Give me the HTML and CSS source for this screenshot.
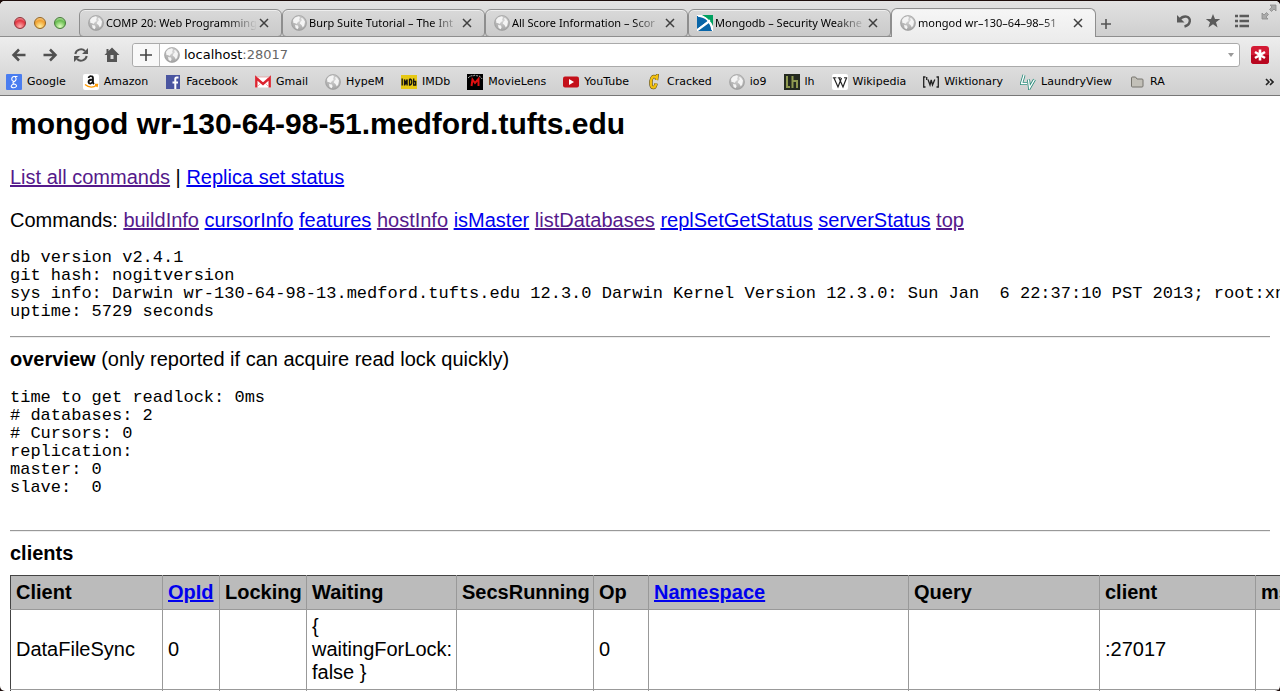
FILE: index.html
```html
<!DOCTYPE html>
<html lang="en">
<head>
<meta charset="utf-8">
<title>mongod wr-130-64-98-51.medford.tufts.edu</title>
<link rel="stylesheet" href="styles.css">
</head>
<body>
<svg class="defs" aria-hidden="true">
  <defs>
    <radialGradient id="ball" cx="50%" cy="30%" r="70%"><stop offset="0" stop-color="#d8d8d8"/><stop offset="1" stop-color="#a2a2a2"/></radialGradient>
    <symbol id="globe" viewBox="0 0 16 16">
      <circle cx="8" cy="8" r="7.500" fill="url(#ball)" stroke="#999" stroke-width=".6"/>
      <path d="M2 5l2-2.500 4-1.300 1 1.600-1 1.500.6 1.600-1.600 1.200L5.500 9 4 8 2.500 8zM10 3l2 .4 2 3-.7 4-1.500 2.200L10.500 10 8.700 8.500 9.700 6.200l1-.6zM4 10l3 .6.6 2-1 1.700L4.600 13z" fill="#f4f4f4"/>
    </symbol>
    <symbol id="close" viewBox="0 0 10 10"><path d="M1 1l8 8M9 1L1 9" stroke="#404040" stroke-width="1.500" fill="none"/></symbol>
  </defs>
</svg>
<div class="window">
  <header class="chrome">
    <div class="tabstrip">
      <div class="lights">
        <button class="light red" aria-label="Close window"></button>
        <button class="light amber" aria-label="Minimise"></button>
        <button class="light green" aria-label="Zoom"></button>
      </div>
      <div class="tabs">
        <div class="tab"><svg class="fav"><use href="#globe"/></svg><span class="tab-title">COMP 20: Web Programming</span><button class="x" aria-label="Close tab"><svg><use href="#close"/></svg></button></div>
        <div class="tab"><svg class="fav"><use href="#globe"/></svg><span class="tab-title">Burp Suite Tutorial – The Int</span><button class="x" aria-label="Close tab"><svg><use href="#close"/></svg></button></div>
        <div class="tab"><svg class="fav"><use href="#globe"/></svg><span class="tab-title">All Score Information – Scor</span><button class="x" aria-label="Close tab"><svg><use href="#close"/></svg></button></div>
        <div class="tab"><svg class="fav" viewBox="0 0 16 16"><path fill="#fff" d="M0 0h16v16H0z"/><path fill="#00a160" d="M5 0h11v11Q14 5 5 0z"/><path fill="#0865a8" d="M0 1q8 0 11 5L0 14zM1 16l11-8q3 4 3 8z"/><path d="M0 15L13 5M1 1q12 1 14 14" stroke="#fff" stroke-width="1.300" fill="none"/></svg><span class="tab-title">Mongodb – Security Weakne</span><button class="x" aria-label="Close tab"><svg><use href="#close"/></svg></button></div>
        <div class="tab active"><svg class="fav"><use href="#globe"/></svg><span class="tab-title">mongod wr–130–64–98–51</span><button class="x" aria-label="Close tab"><svg><use href="#close"/></svg></button></div>
        <button class="newtab" aria-label="New tab"><svg viewBox="0 0 10 10"><path d="M5 0v10M0 5h10" stroke="#555" stroke-width="1.600"/></svg></button>
      </div>
      <div class="tools">
        <button aria-label="Reopen tab"><svg viewBox="0 0 16 16"><path d="M3.500 6.500Q6.500 3 10.500 3.600q3.700 1 3.300 4.700-.6 4-5.300 5.200" fill="none" stroke="#5a5a5a" stroke-width="2.400"/><path d="M1 2v7.500h7.500z" fill="#5a5a5a"/></svg></button>
        <button aria-label="Top sites"><svg viewBox="0 0 16 16"><path d="M8 1l2 5h5.200l-4.200 3.200 1.600 5.300L8 11.300l-4.600 3.200L5 9.200.8 6H6z" fill="#5a5a5a"/></svg></button>
        <button aria-label="Reading list"><svg viewBox="0 0 16 16"><path d="M1 3h3M1 8h3M1 13h3M5.500 3H15M5.500 8H15M5.500 13H15" stroke="#5a5a5a" stroke-width="2.600"/></svg></button>
      </div>
      <button class="full" aria-label="Full screen"><svg viewBox="0 0 16 16"><path d="M9 1h6v6l-2-2-2.500 2.500-2-2L11 3zM7 15H1V9l2 2 2.500-2.500 2 2L5 13z" fill="#aaa" stroke="#8a8a8a" stroke-width=".8"/></svg></button>
    </div>
    <div class="toolbar">
      <nav class="nav">
        <button aria-label="Back"><svg viewBox="0 0 16 16"><path d="M14.500 8H3M8 2.500L2.500 8 8 13.500" fill="none" stroke="#505050" stroke-width="2.500"/></svg></button>
        <button aria-label="Forward"><svg viewBox="0 0 16 16"><path d="M1.500 8H13M8 2.500L13.500 8 8 13.500" fill="none" stroke="#505050" stroke-width="2.500"/></svg></button>
        <button aria-label="Reload"><svg viewBox="0 0 16 16"><path d="M2.300 7a5.800 5.800 0 0 1 9.700-3M13.700 9A5.800 5.800 0 0 1 4 12" fill="none" stroke="#555" stroke-width="2"/><path d="M15 1v6H9zM1 15V9h6z" fill="#555"/></svg></button>
        <button aria-label="Home"><svg viewBox="0 0 16 16"><path d="M8 .5l7.500 7.500H13v7H3V8H.5l2-2V2h2v2z" fill="#555"/><path d="M6.500 8h3v4h-3z" fill="#d8d8d8"/></svg></button>
      </nav>
      <div class="address">
        <button class="add" aria-label="Add bookmark"><svg viewBox="0 0 12 12"><path d="M6 0v12M0 6h12" stroke="#444" stroke-width="1.600"/></svg></button>
        <svg class="fav"><use href="#globe"/></svg>
        <div class="url" role="textbox" aria-label="Address" contenteditable="true">localhost<span class="port">:28017</span></div>
        <button class="drop" aria-label="History"><svg viewBox="0 0 6 6"><path d="M0 1h6L3 5z" fill="#999"/></svg></button>
      </div>
      <button class="ext" aria-label="LastPass"><svg viewBox="0 0 18 18"><rect width="18" height="18" rx="3" fill="#d31a34"/><path d="M0 9h18v6q0 3-3 3H3q-3 0-3-3z" fill="#b8061f"/><path d="M9 3.500v11M4 6l10 6M14 6L4 12" stroke="#fff" stroke-width="2.600"/></svg></button>
    </div>
    <nav class="bookmarks">
      <a href="#"><svg class="fav" viewBox="0 0 16 16"><rect width="16" height="16" rx="1" fill="#4a7df0"/><path d="M11.500 2.500H8a2.500 2.500 0 1 0 .5 5Q6 8.500 7.500 9.700q3.500 1 3 2.600-1 1.700-3.500 1.400-2.500-.6-1.500-2.200Q6 10.500 8 10M9 2.700q2.500 2.500-.5 4.800" fill="none" stroke="#fff" stroke-width="1.100"/></svg>Google</a>
      <a href="#"><svg class="fav" viewBox="0 0 16 16"><rect width="16" height="16" rx="2" fill="#fff"/><path d="M5.500 4Q6 2 8 2.200q2 .1 2 2v4q0 .8 1 1.800M10 5.500Q5.500 5.500 5.500 8q.3 1.800 2 1.600Q9.700 9 10 7" fill="none" stroke="#111" stroke-width="1.800"/><path d="M2 10.500q6 5 12 .5M12 10.500h2.500L14 13" fill="none" stroke="#f90" stroke-width="1.300"/></svg>Amazon</a>
      <a href="#"><svg class="fav" viewBox="0 0 16 16"><path fill="#4a55a0" d="M1 1h14v14H1z"/><path d="M13.500 3.500h-1.800q-1.400 0-1.400 1.600V15M7.500 8.500h5.500" fill="none" stroke="#fff" stroke-width="2"/></svg>Facebook</a>
      <a href="#"><svg class="fav" viewBox="0 0 16 16"><path fill="#fff" d="M0 3h16v10.500H0z"/><path d="M1.300 13.500V4L8 10l6.700-6v9.500" fill="none" stroke="#dc2430" stroke-width="2.400"/><path d="M2 13l4-4M14 13l-4-4M2 3h12" stroke="#e7a0a0" stroke-width=".8"/></svg>Gmail</a>
      <a href="#"><svg class="fav"><use href="#globe"/></svg>HypeM</a>
      <a href="#"><svg class="fav" viewBox="0 0 16 16"><path fill="#e6c814" d="M0 1h16v14H0z"/><path d="M1.200 4.500v7M3.500 11.500v-6l1.300 4 1.300-4v6M8.500 5v6q2.300 0 2.300-3T8.500 5M12.700 4.500v6.500h2V7.500h-2" fill="none" stroke="#111" stroke-width="1.300"/></svg>IMDb</a>
      <a href="#"><svg class="fav" viewBox="0 0 16 16"><path d="M0 0h16v16H0z"/><path d="M4.500 12l1-6.500L8 9l3.500-4v7" fill="none" stroke="#e01010" stroke-width="2"/><path d="M1 4q3-3 5-2 2-1.500 4 0 2.500-1 5 3" fill="none" stroke="#ddd" stroke-width=".9" stroke-dasharray="2 1"/></svg>MovieLens</a>
      <a href="#"><svg class="fav" viewBox="0 0 16 16"><rect y="2.500" width="16" height="11" rx="2" fill="#c4101a"/><path d="M6 5l5 3-5 3z" fill="#fff"/></svg>YouTube</a>
      <a href="#"><svg class="fav" viewBox="0 0 16 16"><path d="M10.500 6l.5-4-1.500 1Q6 1 5 7q-.5 7 2.500 6.500 2 0 2.500-4" fill="none" stroke="#504010" stroke-width="3.400"/><path d="M10.500 6l.5-4-1.500 1Q6 1 5 7q-.5 7 2.500 6.500 2 0 2.500-4" fill="none" stroke="#f2c010" stroke-width="2.400"/></svg>Cracked</a>
      <a href="#"><svg class="fav"><use href="#globe"/></svg>io9</a>
      <a href="#"><svg class="fav" viewBox="0 0 16 16"><path fill="#242a20" d="M0 0h16v16H0z"/><path d="M3 2v11h3M8.500 2v12M8.500 7H13v7" fill="none" stroke="#8f9a50" stroke-width="2"/></svg>lh</a>
      <a href="#"><svg class="fav" viewBox="0 0 16 16"><rect width="16" height="16" rx="2" fill="#fff"/><path d="M2 4l4 9 3.500-9M7 4l4 9 3.500-9" fill="none" stroke="#222" stroke-width="1.200"/><path d="M.8 3.800h3.500M5.800 3.800h3M12 3.800h3.200" stroke="#222"/></svg>Wikipedia</a>
      <a href="#"><svg class="fav" viewBox="0 0 16 16"><path d="M2.500 3H.7v10h1.800M13.500 3h1.800v10h-1.800M3.700 3v3M5 5.500l2 5.500 1.200-5 1.300 5 2.300-5.500" fill="none" stroke="#222" stroke-width="1.300"/></svg>Wiktionary</a>
      <a href="#"><svg class="fav" viewBox="0 0 16 16"><path d="M4 1L1.500 9.500H7M8.500 5.500L9.500 14 14.500 5.500" fill="none" stroke="#278a78" stroke-width="3"/><path d="M4 1L1.500 9.500H7M8.500 5.500L9.500 14 14.500 5.500" fill="none" stroke="#fff" stroke-width="1.400"/></svg>LaundryView</a>
      <a href="#"><svg class="fav" viewBox="0 0 16 16"><path d="M2.500 4q0-1 1-1h3l1.500 2h5q1 0 1 1v6q0 1-1 1h-9.500q-1 0-1-1z" fill="#c2c0b8" stroke="#77756e"/></svg>RA</a>
      <button class="more" aria-label="More bookmarks"><svg viewBox="0 0 9 8"><path d="M1 1l3 3-3 3M5 1l3 3-3 3" fill="none" stroke="#222" stroke-width="1.600"/></svg></button>
    </nav>
  </header>
  <main class="page">
    <h1>mongod wr-130-64-98-51.medford.tufts.edu</h1>
    <p class="links"><a class="seen" href="#">List all commands</a> | <a href="#">Replica set status</a></p>
    <p class="commands">Commands: <a class="seen" href="#">buildInfo</a> <a href="#">cursorInfo</a> <a href="#">features</a> <a class="seen" href="#">hostInfo</a> <a href="#">isMaster</a> <a class="seen" href="#">listDatabases</a> <a href="#">replSetGetStatus</a> <a href="#">serverStatus</a> <a class="seen" href="#">top</a></p>
<pre>db version v2.4.1
git hash: nogitversion
sys info: Darwin wr-130-64-98-13.medford.tufts.edu 12.3.0 Darwin Kernel Version 12.3.0: Sun Jan  6 22:37:10 PST 2013; root:xnu-
uptime: 5729 seconds</pre>
    <hr>
    <p class="section"><b>overview</b> (only reported if can acquire read lock quickly)</p>
<pre>time to get readlock: 0ms
# databases: 2
# Cursors: 0
replication:
master: 0
slave:  0

</pre>
    <hr>
    <p class="section table-title"><b>clients</b></p>
    <table>
      <colgroup><col class="c-client"><col class="c-opid"><col class="c-lock"><col class="c-wait"><col class="c-secs"><col class="c-op"><col class="c-ns"><col class="c-query"><col class="c-addr"><col class="c-msg"></colgroup>
      <thead><tr><th>Client</th><th><a href="#">OpId</a></th><th>Locking</th><th>Waiting</th><th>SecsRunning</th><th>Op</th><th><a href="#">Namespace</a></th><th>Query</th><th>client</th><th>msg</th></tr></thead>
      <tbody>
        <tr><td>DataFileSync</td><td>0</td><td></td><td>{ waitingForLock: false }</td><td></td><td>0</td><td></td><td></td><td>:27017</td><td></td></tr>
        <tr><td></td><td></td><td></td><td></td><td></td><td></td><td></td><td></td><td></td><td></td></tr>
      </tbody>
    </table>
  </main>
</div>
</body>
</html>
```

FILE: styles.css
```css
* { box-sizing: border-box; }
body { margin: 0; padding-top: 1px; height: 100vh; overflow: hidden; background: #1c0c0a; }
button { border: 0; padding: 0; background: none; display: flex; align-items: center; justify-content: center; }
.defs { position: absolute; width: 0; height: 0; }
.window { height: 100%; overflow: hidden; border-radius: 5px; background: #fff; }

.chrome { font-family: "DejaVu Sans", sans-serif; font-size: 11px; color: #000; background: linear-gradient(#ededed 36px, #cfcfcf); border-bottom: 1px solid #777; }
.tabstrip { height: 36px; display: flex; align-items: flex-end; padding-right: 3px; background: linear-gradient(#e2e2e2, #cecece); box-shadow: inset 0 -1px #8e8e8e; }
.lights { display: flex; gap: 8px; padding: 0 13px 8px 14px; }
.light { width: 12px; height: 12px; border-radius: 50%; border: 1px solid; }
.red { background: radial-gradient(circle at 50% 85%, #ffb0b0, #e23440 60%, #f8c0c0); border-color: #8e3038; }
.amber { background: radial-gradient(circle at 50% 85%, #fff0a0, #f0a030 60%, #fbe0b0); border-color: #946420; }
.green { background: radial-gradient(circle at 50% 85%, #e0ffc0, #68bc50 60%, #d0f0c0); border-color: #447a38; }
.tabs { flex: 1; display: flex; align-items: flex-end; min-width: 0; }
.tab { flex: 0 1 203px; min-width: 0; height: 28px; display: flex; align-items: center; padding: 0 12px 0 8px; border: 1px solid #8e8e8e; border-radius: 6px 6px 4px 4px; background: linear-gradient(#d9d9d9, #cacaca); box-shadow: inset 0 1px #eee; }
.tab.active { height: 29px; flex-basis: 205px; border-bottom: 0; border-radius: 6px 6px 0 0; background: linear-gradient(#f6f6f6, #ededed); }
.fav { width: 16px; height: 16px; flex: none; }
.tab-title { flex: 1; min-width: 0; margin-left: 2px; overflow: hidden; white-space: nowrap; font-family: "Noto Sans", sans-serif; line-height: 16px; -webkit-mask-image: linear-gradient(90deg, #000 80%, transparent); mask-image: linear-gradient(90deg, #000 80%, transparent); }
.x { margin-left: 2px; }
.x svg { width: 10px; height: 10px; }
.newtab { padding: 0 5px 8px; }
.newtab svg { width: 10px; height: 10px; }
.tools { display: flex; gap: 13px; padding: 0 11px 8px 0; }
.tools svg { width: 16px; height: 16px; display: block; }
.full { align-self: flex-start; padding-top: 3px; }
.full svg { width: 16px; height: 16px; }

.toolbar { display: flex; align-items: center; padding: 6px 11px 0; }
.nav { display: flex; gap: 15px; padding-right: 12px; }
.nav svg { width: 16px; height: 16px; }
.address { flex: 1; display: flex; align-items: center; height: 24px; background: #fff; border: 1px solid #aaa; border-radius: 3px; padding-right: 5px; }
.add { width: 27px; height: 22px; margin-right: 4px; border-right: 1px solid #b8b8b8; background: #f8f8f8; border-radius: 3px 0 0 3px; }
.add svg { width: 12px; height: 12px; }
.url { flex: 1; margin-left: 4px; font-size: 13px; line-height: 20px; outline: 0; }
.port { color: #666; }
.drop svg { width: 6px; height: 6px; }
.ext { margin-left: 11px; }
.ext svg { width: 18px; height: 18px; }
.bookmarks { display: flex; align-items: center; gap: 17px; height: 28px; padding: 1px 6px 0; }
.bookmarks a { display: flex; align-items: center; gap: 5px; color: #000; text-decoration: none; white-space: nowrap; line-height: 16px; }
.more { margin-left: auto; }
.more svg { width: 9px; height: 8px; }

.page { padding: 10px 10px 0; font: 20px/23px "Liberation Sans", Arial, sans-serif; color: #000; }
h1 { margin: 0 0 24px; font-size: 30px; line-height: 36px; }
p { margin: 0; }
.links { margin-bottom: 20px; }
.commands { margin-bottom: 17px; }
a { color: #00e; }
.seen { color: #551a8b; }
pre { margin: 0; font: 17px/18px "Liberation Mono", monospace; }
hr { margin: 15px 0 10px; border: 0; border-top: 1px solid #999; border-bottom: 1px solid #eee; }
.section { margin-bottom: 18px; }
.table-title { margin-bottom: 10px; }
table { table-layout: fixed; width: 1400px; border-collapse: collapse; }
th, td { border: 1px solid #999; padding: 5px; text-align: left; }
th { background: #bbb; border-top-color: #444; }
th:first-child, td:first-child { border-left-color: #444; }
td { height: 34px; }
.c-client { width: 152px; }
.c-opid { width: 57px; }
.c-lock { width: 87px; }
.c-wait { width: 150px; }
.c-secs { width: 137px; }
.c-op { width: 55px; }
.c-ns { width: 260px; }
.c-query { width: 191px; }
.c-addr { width: 156px; }
```
